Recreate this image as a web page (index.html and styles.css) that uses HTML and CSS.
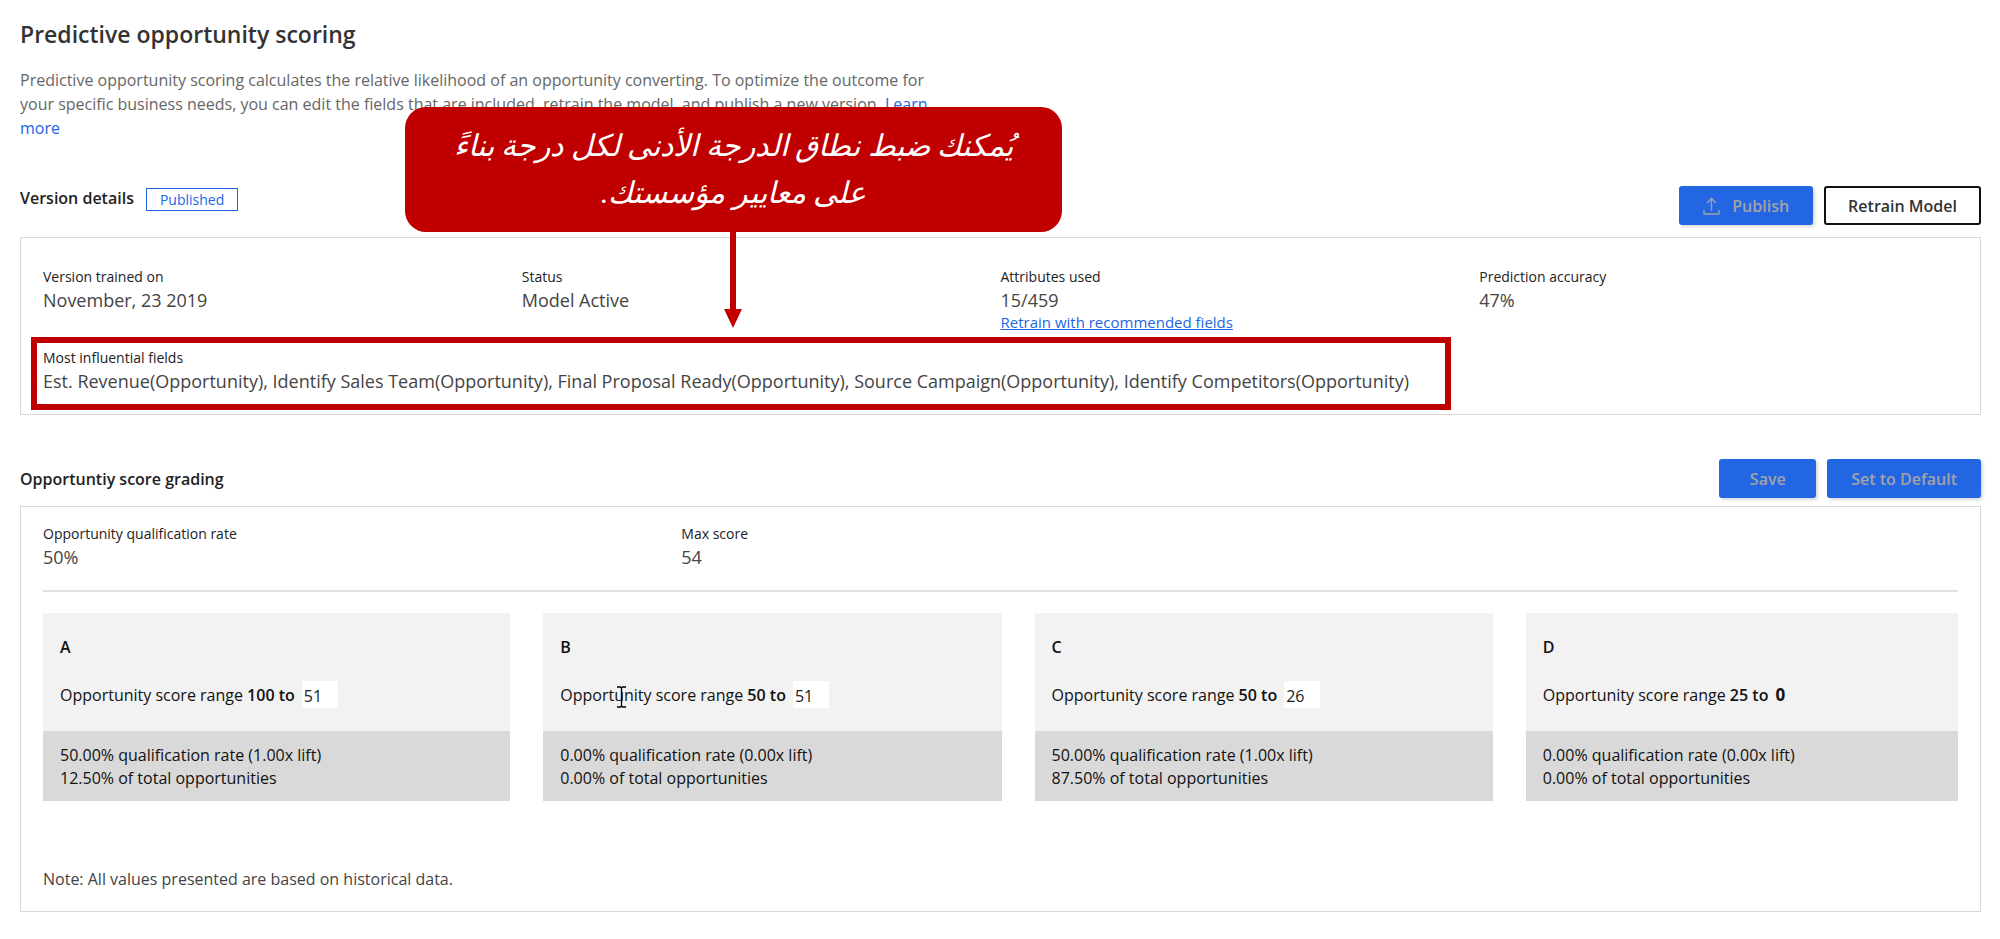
FILE: index.html
```
<!DOCTYPE html>
<html lang="en">
<head>
<meta charset="utf-8">
<title>Predictive opportunity scoring</title>
<link rel="stylesheet" href="styles.css">
</head>
<body>
<main class="page">
  <header class="intro">
    <h1 class="title">Predictive opportunity scoring</h1>
    <p class="lead">Predictive opportunity scoring calculates the relative likelihood of an opportunity converting. To optimize the outcome for your specific business needs, you can edit the fields that are included, retrain the model, and publish a new version. <a class="link" href="#">Learn more</a></p>
  </header>

  <section class="section">
    <div class="bar bar-top">
      <h2 class="heading">Version details</h2>
      <span class="badge">Published</span>
      <div class="actions">
        <button class="btn btn-primary" type="button" disabled>
          <svg class="icon" viewBox="0 0 17 18" aria-hidden="true"><path d="M8.500 14V1.500M4 6l4.500-4.500L13 6M1 13v4h15v-4" fill="none" stroke="currentColor" stroke-width="1.400"/></svg>
          Publish
        </button>
        <button class="btn btn-outline" type="button">Retrain Model</button>
      </div>
    </div>
    <div class="panel details">
      <dl class="stats">
        <div class="stat"><dt>Version trained on</dt><dd>November, 23 2019</dd></div>
        <div class="stat"><dt>Status</dt><dd>Model Active</dd></div>
        <div class="stat"><dt>Attributes used</dt><dd>15/459</dd><dd class="note-link"><a class="link underlined" href="#">Retrain with recommended fields</a></dd></div>
        <div class="stat"><dt>Prediction accuracy</dt><dd>47%</dd></div>
      </dl>
      <dl class="stat highlight">
        <dt>Most influential fields</dt>
        <dd>Est. Revenue(Opportunity), Identify Sales Team(Opportunity), Final Proposal Ready(Opportunity), Source Campaign(Opportunity), Identify Competitors(Opportunity)</dd>
      </dl>
    </div>
  </section>

  <section class="section">
    <div class="bar">
      <h2 class="heading">Opportuntiy score grading</h2>
      <div class="actions">
        <button class="btn btn-primary" type="button" disabled>Save</button>
        <button class="btn btn-primary" type="button" disabled>Set to Default</button>
      </div>
    </div>
    <div class="panel grading">
      <dl class="summary">
        <div class="stat"><dt>Opportunity qualification rate</dt><dd>50%</dd></div>
        <div class="stat"><dt>Max score</dt><dd>54</dd></div>
      </dl>
      <div class="grades">
        <article class="grade">
          <div class="grade-top">
            <h3 class="letter">A</h3>
            <div class="range"><label for="min-a">Opportunity score range <b>100 to</b></label><input class="score" id="min-a" type="text" value="51"></div>
          </div>
          <div class="grade-bottom">50.00% qualification rate (1.00x lift)<br>12.50% of total opportunities</div>
        </article>
        <article class="grade">
          <div class="grade-top">
            <h3 class="letter">B</h3>
            <div class="range"><label for="min-b">Opportunity score range <b>50 to</b></label><input class="score" id="min-b" type="text" value="51">
              <svg class="ibeam" viewBox="0 0 9 22" aria-hidden="true"><path d="M0 1h3.500l1 1 1-1H9M0 21h3.500l1-1 1 1H9M4.500 2v18" fill="none" stroke="#000" stroke-width="1.300"/></svg>
            </div>
          </div>
          <div class="grade-bottom">0.00% qualification rate (0.00x lift)<br>0.00% of total opportunities</div>
        </article>
        <article class="grade">
          <div class="grade-top">
            <h3 class="letter">C</h3>
            <div class="range"><label for="min-c">Opportunity score range <b>50 to</b></label><input class="score" id="min-c" type="text" value="26"></div>
          </div>
          <div class="grade-bottom">50.00% qualification rate (1.00x lift)<br>87.50% of total opportunities</div>
        </article>
        <article class="grade">
          <div class="grade-top">
            <h3 class="letter">D</h3>
            <div class="range"><span>Opportunity score range <b>25 to</b></span><b class="zero">0</b></div>
          </div>
          <div class="grade-bottom">0.00% qualification rate (0.00x lift)<br>0.00% of total opportunities</div>
        </article>
      </div>
      <p class="footnote">Note: All values presented are based on historical data.</p>
    </div>
  </section>

  <aside class="callout" lang="ar" dir="rtl">
    يُمكنك ضبط نطاق الدرجة الأدنى لكل درجة بناءً<br>على معايير مؤسستك.
    <svg class="arrow" viewBox="0 0 18 97" aria-hidden="true"><path d="M6 0h6v78h6L9 97 0 78h6z" fill="#c00000"/></svg>
  </aside>
</main>
</body>
</html>
```
FILE: styles.css
```
* { box-sizing: border-box; }
body {
  margin: 0;
  background: #fff;
  color: #333;
  font-family: "Open Sans", "Noto Sans", sans-serif;
  font-size: 16px;
  line-height: 24px;
}
h1, h2, h3, p, dl, dd { margin: 0; }
.page { position: relative; padding: 18px 19px 28px 20px; }
.title { font-size: 23px; line-height: 32px; font-weight: 600; color: #333; }
.lead { margin-top: 18px; max-width: 930px; color: #666; }
.link { color: #2266e3; text-decoration: none; }
.underlined { text-decoration: underline; }

.section { margin-top: 46px; }
.section + .section { margin-top: 44px; }
.bar { display: flex; align-items: center; gap: 12px; margin-bottom: 8px; }
.bar-top { align-items: flex-start; margin-bottom: 12px; }
.heading { font-size: 16px; line-height: 24px; font-weight: 600; color: #222; }
.badge { margin-top: 2px; border: 1px solid #2266e3; padding: 0 13px; font-size: 14px; line-height: 21px; color: #2266e3; }
.actions { display: flex; gap: 11px; margin-left: auto; }
.btn {
  display: flex; align-items: center; justify-content: center; gap: 12px;
  height: 39px; min-width: 97px; padding: 0 22px;
  border: 2px solid #111; border-radius: 3px;
  background: #fff; color: #333;
  font: 600 16px/24px "Open Sans", "Noto Sans", sans-serif;
}
.btn-primary { border-color: #2266e3; background: #2266e3; color: #a3a3a6; box-shadow: 2px 2px 3px rgba(0, 0, 0, .15); }
.btn .icon { width: 17px; height: 18px; }

.panel { border: 1px solid #d9d9d9; padding: 0 22px; }
.details { padding-top: 28px; padding-bottom: 4px; }
.stats { display: grid; grid-template-columns: repeat(4, 1fr); min-height: 71px; }
.stat dt { font-size: 14px; line-height: 22px; color: #222; }
.stat dd { font-size: 18px; line-height: 24px; color: #444; }
.stat .note-link { font-size: 15px; line-height: 20px; }
.highlight { width: fit-content; margin-left: -12px; border: 6px solid #c00000; padding: 4px 36px 11px 6px; }

.grading { padding-top: 16px; padding-bottom: 20px; }
.summary { display: grid; grid-template-columns: repeat(3, 1fr); border-bottom: 2px solid #e1e1e1; padding-bottom: 21px; }
.grades { display: grid; grid-template-columns: 467fr 458fr 458fr 432fr; gap: 33px; margin-top: 21px; }
.grade { color: #111; }
.grade-top { background: #f2f2f2; padding: 22px 17px 23px; }
.grade-bottom { background: #d9d9d9; padding: 13px 17px 11px; font-size: 16px; line-height: 23px; }
.letter { font-size: 16px; line-height: 24px; font-weight: 600; }
.range { position: relative; display: flex; align-items: center; gap: 7px; margin-top: 22px; height: 27px; font-size: 16px; }
.range b { font-weight: 600; }
.range .zero { font-size: 17px; font-weight: 700; }
.score { width: 36px; height: 27px; border: 0; padding: 2px 2px 0; background: #fff; color: #222; font: 16px/24px "Open Sans", "Noto Sans", sans-serif; }
.ibeam { position: absolute; left: 57px; top: 5px; width: 9px; height: 22px; }
.footnote { margin-top: 66px; font-size: 16px; color: #444; }

.callout {
  position: absolute; left: 405px; top: 107px;
  width: 657px; height: 125px; padding-top: 15px;
  border-radius: 21px; background: #c00000; color: #fff;
  text-align: center; font-family: "Liberation Serif", "DejaVu Sans", serif; font-size: 30px; line-height: 47px; font-style: italic;
}
.arrow { position: absolute; left: 319px; top: 124px; width: 18px; height: 97px; }
```
